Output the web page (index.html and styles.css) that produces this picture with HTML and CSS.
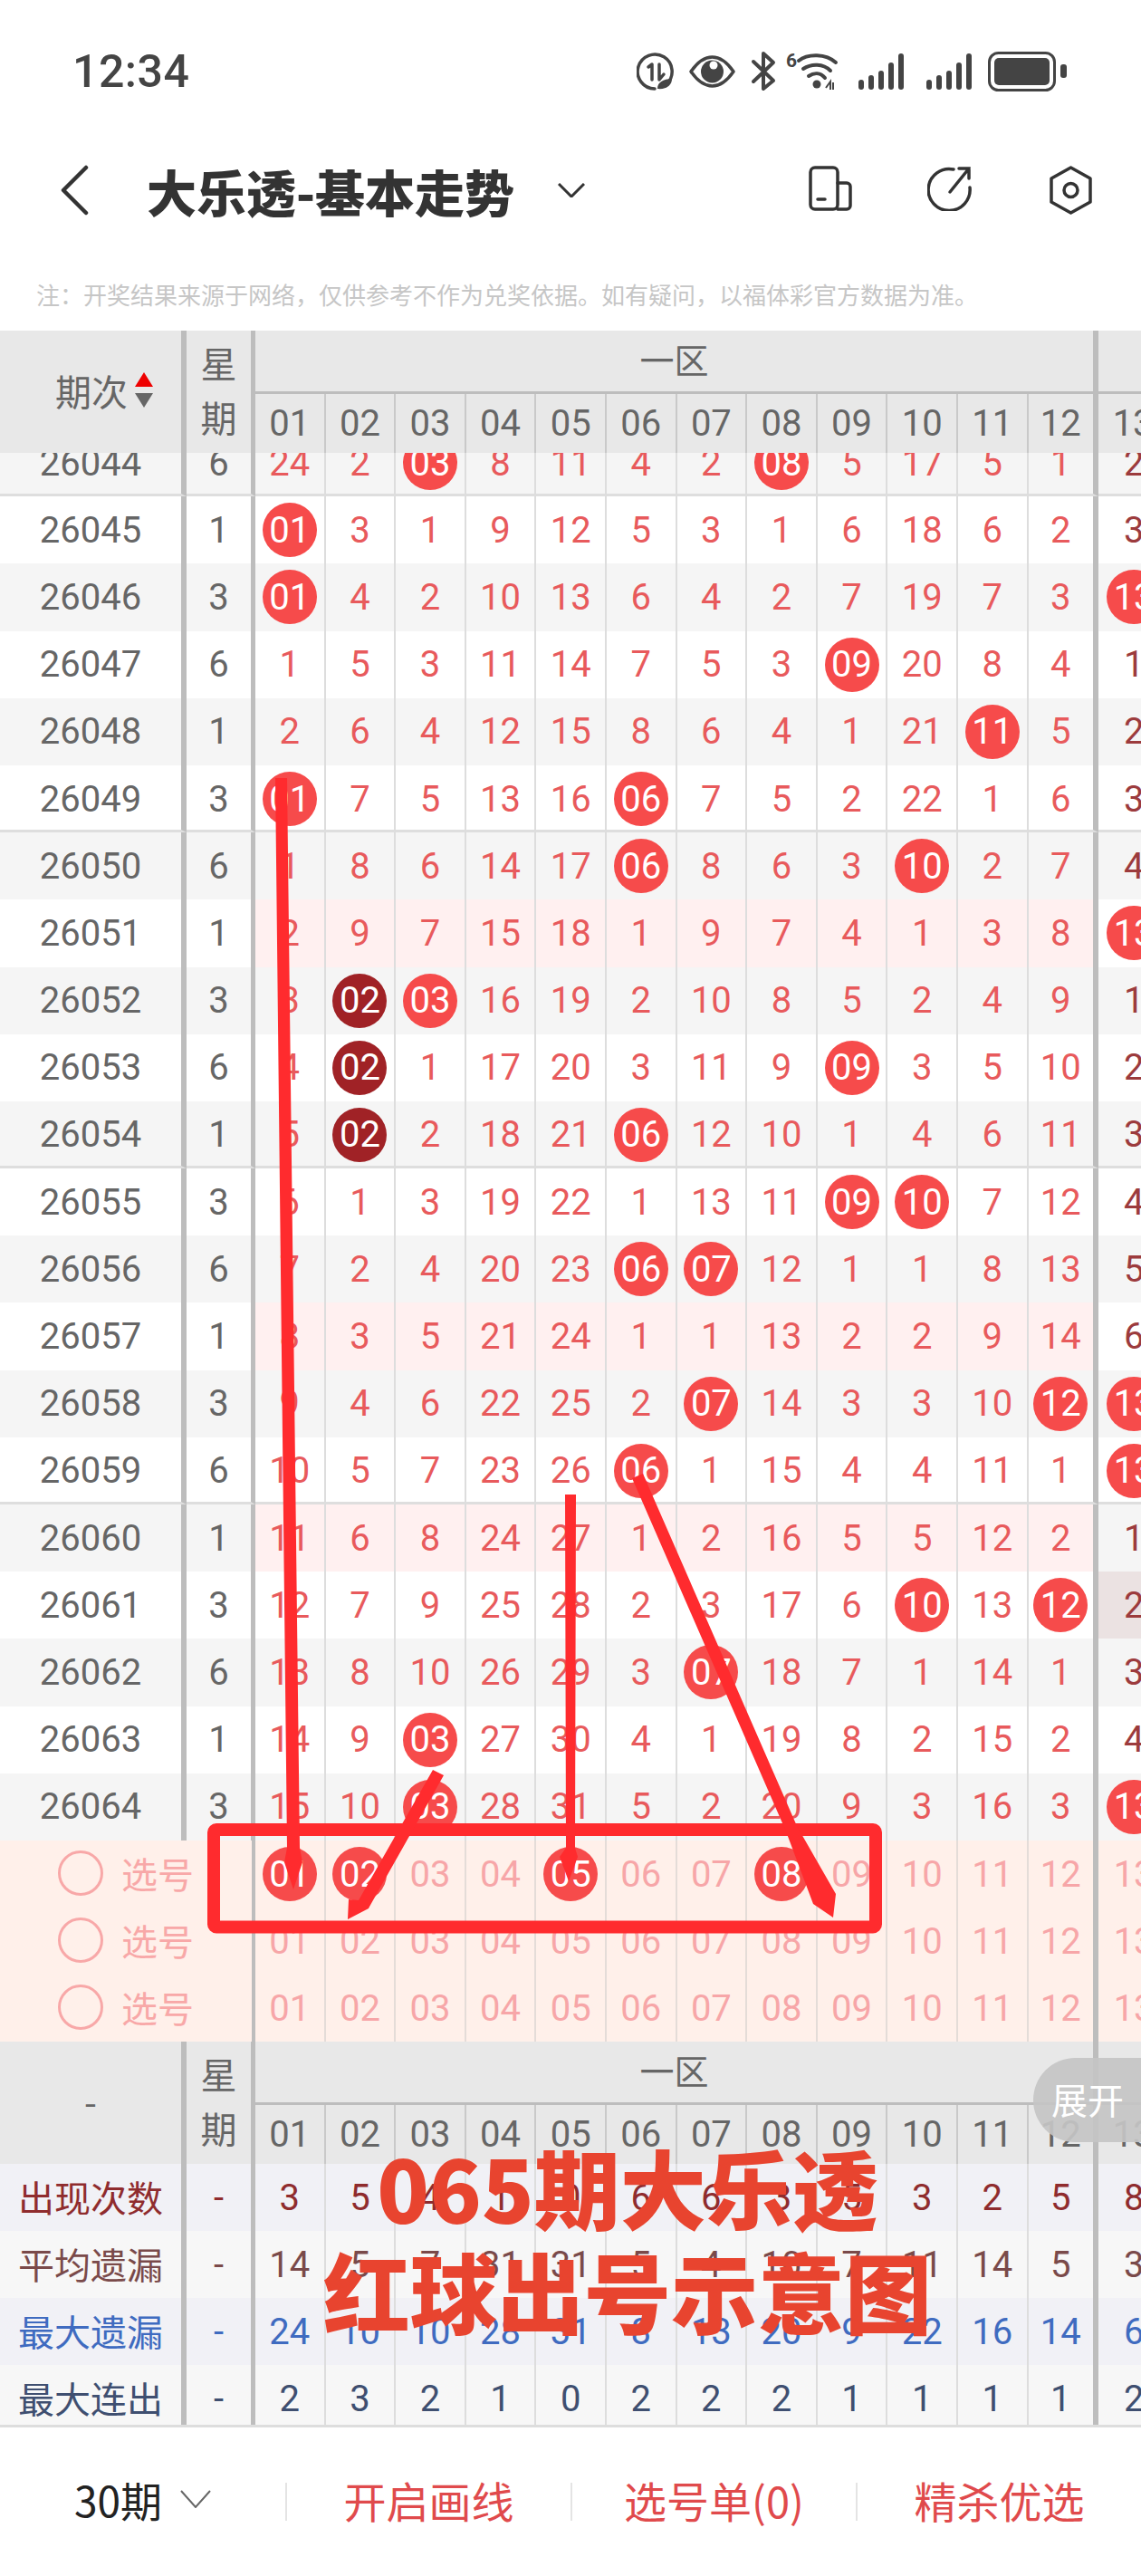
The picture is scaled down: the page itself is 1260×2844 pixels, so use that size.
FILE: index.html
```html
<!DOCTYPE html>
<html lang="zh-CN">
<head>
  <meta charset="UTF-8" />
  <title>大乐透-基本走势</title>
  <link rel="stylesheet" href="styles.css">
</head>
<body>
<div class="page">

  <div class="status">
    <span class="clock">12:34</span>
    <svg class="status-icons" viewBox="703 56 475 44" width="475" height="44">
      <g fill="none" stroke="#444" stroke-width="3.5" stroke-linecap="round" stroke-linejoin="round">
        <path d="M736 92A19 19 0 1 0 723 97"/>
        <path d="M716 73l4-3v17M728 70v17l5-6"/>
        <path d="M763 78C772 65 780 62 786.500 62S801 65 810 78C801 91 793 94 786.500 94S772 91 763 78Z"/>
        <path d="M832 67L854 88L843 97V58L854 68L832 89" stroke-width="4"/>
        <path d="M882 66C892 58 912 58 923 68M887 75C896 69 909 69 917 77M893 83C899 79 906 79 911 85" stroke-width="4"/>
      </g>
      <path d="M726 97c0-7 6-11 16-11 0 7-6 12-16 11z" fill="#444"/>
      <circle cx="786.500" cy="78" r="12.500" fill="#444"/>
      <circle cx="788" cy="71" r="4.500" fill="#fff"/>
      <circle cx="902" cy="92" r="4.500" fill="#444"/>
      <path d="M912 96l5-7v9M920 90v8" fill="none" stroke="#444" stroke-width="2"/>
      <text x="868" y="73" class="wifi-six">6</text>
      <g stroke="#444" stroke-width="6" stroke-linecap="round">
        <path d="M951 95v-5M962 95v-10M973 95v-15M984 95v-24M995 95v-34"/>
        <path d="M1026 95v-5M1037 95v-10M1048 95v-15M1059 95v-24M1070 95v-34"/>
      </g>
      <rect x="1092.500" y="57.500" width="72" height="41" rx="10" fill="none" stroke="#444" stroke-width="3"/>
      <rect x="1098" y="63" width="61" height="30" rx="5" fill="#444"/>
      <rect x="1171" y="70" width="7" height="15" rx="3" fill="#444"/>
    </svg>
  </div>

  <div class="nav">
    <svg class="back" viewBox="0 0 32 56" width="32" height="56">
      <path d="M29 3L4 28L29 53" fill="none" stroke="#333" stroke-width="4.500" stroke-linecap="round" stroke-linejoin="round"/>
    </svg>
    <h1 class="title">大乐透-基本走势</h1>
    <svg class="caret" viewBox="0 0 30 16" width="30" height="16">
      <path d="M1 1L15 15L29 1" fill="none" stroke="#333" stroke-width="3"/>
    </svg>
    <div class="nav-icons">
      <svg viewBox="0 0 48 50" width="48" height="50" fill="none" stroke="#333" stroke-width="3.500" stroke-linecap="round">
        <rect x="2" y="2" width="30" height="46" rx="5"/>
        <path d="M32 19h10a4 4 0 0 1 4 4v21a4 4 0 0 1-4 4H32M10 37h8"/>
      </svg>
      <svg viewBox="0 0 52 50" width="52" height="50" fill="none" stroke="#333" stroke-width="3.500" stroke-linecap="round">
        <path d="M29 4A23 23 0 1 0 47 24"/>
        <path d="M25 29L46 3M35 3h11v11"/>
      </svg>
      <svg viewBox="0 0 47 54" width="47" height="54" fill="none" stroke="#333" stroke-width="3.500" stroke-linejoin="round">
        <path d="M23.500 2L45 14V40L23.500 52L2 40V14Z"/>
        <circle cx="23.500" cy="27" r="7.500"/>
      </svg>
    </div>
  </div>

  <p class="note">注：开奖结果来源于网络，仅供参考不作为兑奖依据。如有疑问，以福体彩官方数据为准。</p>

  <div class="chart">
    <div class="head">
      <div class="head-name">
        <span>期次</span>
        <svg viewBox="0 0 20 40" width="20" height="40">
          <path d="M10 0L20 16H0Z" fill="#ee0000"/>
          <path d="M0 23H20L10 39Z" fill="#666"/>
        </svg>
      </div>
      <div class="head-week"><span>星</span><span>期</span></div>
      <div class="zone">
        <div class="zone-top"><div class="zone-one">一区</div></div>
        <div class="zone-nums"></div>
      </div>
    </div>

    <div class="scroll"><div id="rows" class="rows"></div></div>
    <div id="pick"></div>

    <div class="head">
      <div class="head-name head-dash">-</div>
      <div class="head-week"><span>星</span><span>期</span></div>
      <div class="zone">
        <div class="zone-top"><div class="zone-one">一区</div></div>
        <div class="zone-nums"></div>
      </div>
    </div>

    <div id="stats" class="stats"></div>
    <div class="expand">展开</div>
  </div>

  <div class="bottom">
    <div class="tab tab-first">30期
      <svg viewBox="0 0 34 20" width="34" height="20">
        <path d="M1 1L17 19L33 1" fill="none" stroke="#666" stroke-width="2"/>
      </svg>
    </div>
    <div class="tab">开启画线</div>
    <div class="tab">选号单(0)</div>
    <div class="tab">精杀优选</div>
  </div>

  <!-- hand drawn marks on top of the screenshot -->
  <svg class="marks" viewBox="0 0 1260 2844" width="1260" height="2844">
    <rect x="236" y="2020" width="731" height="107.500" rx="3" fill="none" stroke="#ff2b2e" stroke-width="14"/>
    <g fill="#ff2b2e">
      <path d="M304 859H317L331 2040L334 2056L324 2086L314 2056L317 2040Z"/>
      <path d="M624 1650H636L635 2040L638 2050L628 2077L618 2050L625 2040Z"/>
      <path d="M698 1632L710 1627L880 2016L923 2091L920 2117L898 2102L868 2022Z"/>
      <path d="M478 1954L490 1960L408 2105L407 2107L384 2119L385 2097L396 2098Z"/>
    </g>
  </svg>
  <div class="poster">
    <div class="poster-one">065期大乐透</div>
    <div>红球出号示意图</div>
  </div>
</div>

<script>
  const rows = [
    ["26044", 6, "24 2 03* 8 11 4 2 08* 5 17 5 1 2"],
    ["26045", 1, "01* 3 1 9 12 5 3 1 6 18 6 2 3"],
    ["26046", 3, "01* 4 2 10 13 6 4 2 7 19 7 3 13*"],
    ["26047", 6, "1 5 3 11 14 7 5 3 09* 20 8 4 1"],
    ["26048", 1, "2 6 4 12 15 8 6 4 1 21 11* 5 2"],
    ["26049", 3, "01* 7 5 13 16 06* 7 5 2 22 1 6 3"],
    ["26050", 6, "1 8 6 14 17 06* 8 6 3 10* 2 7 4"],
    ["26051", 1, "2 9 7 15 18 1 9 7 4 1 3 8 13*"],
    ["26052", 3, "3 02! 03* 16 19 2 10 8 5 2 4 9 1"],
    ["26053", 6, "4 02! 1 17 20 3 11 9 09* 3 5 10 2"],
    ["26054", 1, "5 02! 2 18 21 06* 12 10 1 4 6 11 3"],
    ["26055", 3, "6 1 3 19 22 1 13 11 09* 10* 7 12 4"],
    ["26056", 6, "7 2 4 20 23 06* 07* 12 1 1 8 13 5"],
    ["26057", 1, "8 3 5 21 24 1 1 13 2 2 9 14 6"],
    ["26058", 3, "9 4 6 22 25 2 07* 14 3 3 10 12* 13*"],
    ["26059", 6, "10 5 7 23 26 06* 1 15 4 4 11 1 13*"],
    ["26060", 1, "11 6 8 24 27 1 2 16 5 5 12 2 1"],
    ["26061", 3, "12 7 9 25 28 2 3 17 6 10* 13 12* 2"],
    ["26062", 6, "13 8 10 26 29 3 07* 18 7 1 14 1 3"],
    ["26063", 1, "14 9 03* 27 30 4 1 19 8 2 15 2 4"],
    ["26064", 3, "15 10 03* 28 31 5 2 20 9 3 16 3 13*"]
  ];
  const pinkRows = ["26051", "26057", "26060"];
  const lineRows = ["26044", "26049", "26054", "26059"];
  const allNums = "01 02 03 04 05 06 07 08 09 10 11 12 13".split(" ");

  const stats = [
    ["出现次数", "red", "3 5 4 1 0 6 6 3 5 3 2 5 8"],
    ["平均遗漏", "brown", "14 5 7 31 31 5 4 10 7 11 14 5 3"],
    ["最大遗漏", "blue", "24 10 10 28 31 8 13 20 9 22 16 14 6"],
    ["最大连出", "slate", "2 3 2 1 0 2 2 2 1 1 1 1 2"]
  ];

  function numCell(text, extra) {
    let inner = text;
    if (text.endsWith("*")) inner = `<b class="ball">${text.slice(0, -1)}</b>`;
    if (text.endsWith("!")) inner = `<b class="ball ball-dark">${text.slice(0, -1)}</b>`;
    return `<div class="cell num ${extra || ""}">${inner}</div>`;
  }

  document.querySelectorAll(".zone-nums").forEach(el => {
    el.innerHTML = allNums.map(n => `<div class="zone-num">${n}</div>`).join("");
  });

  document.getElementById("rows").innerHTML = rows.map(([name, week, nums], r) => {
    const cls = [r % 2 === 0 ? "alt" : "", lineRows.includes(name) ? "line" : ""].join(" ");
    const cells = nums.split(" ").map((n, i) => {
      if (i === 12) return numCell(n, name === "26061" ? "c13 c13-mark" : "c13");
      return numCell(n, pinkRows.includes(name) ? "pink" : "");
    }).join("");
    return `<div class="row ${cls}"><div class="cell name">${name}</div><div class="cell wk">${week}</div>${cells}</div>`;
  }).join("");

  const firstPick = ["01", "02", "05", "08"];
  document.getElementById("pick").innerHTML = [0, 1, 2].map(r => {
    const cells = allNums.map(n => numCell(r === 0 && firstPick.includes(n) ? n + "*" : n)).join("");
    return `<div class="row pick-row"><div class="pick-label"><i class="radio"></i>选号</div>${cells}</div>`;
  }).join("");

  document.getElementById("stats").innerHTML = stats.map(([name, tone, nums], r) => {
    const cells = nums.split(" ").map(n => numCell(n)).join("");
    return `<div class="row stat ${tone} ${r % 2 ? "stat-alt" : ""}"><div class="cell name">${name}</div><div class="cell wk">-</div>${cells}</div>`;
  }).join("");
</script>
</body>
</html>
```

FILE: styles.css
```css
* {
  box-sizing: border-box;
}

body {
  margin: 0;
  background: #fff;
  font-family: Roboto, "Noto Sans CJK SC", sans-serif;
  color: #666;
}

.page {
  position: relative;
  width: 1260px;
  height: 2844px;
  overflow: hidden;
}

/* status bar */
.status {
  display: flex;
  align-items: center;
  justify-content: space-between;
  height: 158px;
  padding: 0 82px 0 80px;
}

.clock {
  font-size: 50px;
  font-weight: 500;
  color: #444;
  letter-spacing: 0.5px;
}

.wifi-six {
  font-family: Roboto, sans-serif;
  font-size: 21px;
  font-weight: 700;
  fill: #444;
}

/* title bar */
.nav {
  display: flex;
  align-items: center;
  height: 104px;
  padding: 0 54px 0 66px;
}

.title {
  margin: 0 48px 0 64px;
  font-family: "Noto Sans CJK SC", sans-serif;
  font-size: 55px;
  font-weight: 900;
  color: #333;
  white-space: nowrap;
}

.nav-icons {
  display: flex;
  gap: 83px;
  margin-left: auto;
}

.note {
  height: 103px;
  margin: 0;
  padding: 50px 0 0 40px;
  font-family: "Noto Sans CJK SC", sans-serif;
  font-size: 26px;
  line-height: 26px;
  color: #c6c6c6;
  white-space: nowrap;
}

/* chart */
.chart {
  position: relative;
  border-bottom: 3px solid #ddd;
}

.head {
  display: grid;
  grid-template-columns: 206px 76px 1fr;
  height: 135px;
  background: #e8e8e8;
  font-size: 40px;
}

.head-name {
  display: flex;
  align-items: center;
  justify-content: flex-start;
  gap: 8px;
  padding: 0 0 3px 61px;
  border-right: 6px solid #bdbdbd;
  font-family: "Noto Sans CJK SC", sans-serif;
}

.head-dash {
  justify-content: center;
  padding: 0 0 5px;
}

.head-week {
  display: flex;
  flex-direction: column;
  align-items: center;
  justify-content: center;
  gap: 8px;
  padding-bottom: 5px;
  border-right: 5px solid #bdbdbd;
  font-family: "Noto Sans CJK SC", sans-serif;
  line-height: 52px;
}

.zone {
  overflow: hidden;
}

.zone-top {
  height: 70px;
  border-bottom: 3px solid #bdbdbd;
}

.zone-one {
  width: 931.2px;
  height: 67px;
  border-right: 6px solid #bdbdbd;
  font-family: "Noto Sans CJK SC", sans-serif;
  font-size: 38px;
  line-height: 61px;
  text-align: center;
}

.zone-nums {
  display: grid;
  grid-template-columns: repeat(12, 77.6px) 78px;
  height: 65px;
}

.zone-num {
  display: flex;
  align-items: center;
  justify-content: center;
  border-right: 2px solid #c9c9c9;
}

.zone-num:nth-child(12) {
  border-right: 6px solid #bdbdbd;
}

.scroll {
  height: 1532px;
  overflow: hidden;
}

.rows {
  margin-top: -26px;
}

.row {
  display: grid;
  grid-template-columns: 206px 76px repeat(12, 77.6px) 78px;
  height: 74.2px;
  background: #fff;
  font-size: 40px;
}

.row.alt {
  background: #f5f5f5;
}

.cell {
  display: flex;
  align-items: center;
  justify-content: center;
}

.row.line .cell {
  padding-top: 3px;
  border-bottom: 3px solid #dedede;
}

.name {
  border-right: 6px solid #bdbdbd;
}

.wk {
  border-right: 5px solid #bdbdbd;
}

.num {
  border-right: 2px solid #ddd;
  color: #e85a5c;
}

.num:nth-child(14) {
  border-right: 6px solid #bdbdbd;
}

.num.c13 {
  border-right: none;
  color: #9c3b3d;
}

.num.c13-mark {
  background: #ebe2e2;
}

.num.pink {
  background: #fff0f0;
}

.ball {
  display: flex;
  align-items: center;
  justify-content: center;
  flex: none;
  width: 60px;
  height: 60px;
  border-radius: 50%;
  background: #f64b4b;
  color: #fff;
  font-weight: 400;
}

.ball-dark {
  background: #a02226;
}

/* pick rows */
.pick-row {
  height: 74px;
  background: #fff0ea;
}

.pick-row .num {
  border-right-color: #e4dcd8;
  color: #f7a6a8;
}

.pick-row .num:nth-child(13) {
  border-right: 6px solid #bdbdbd;
}

.pick-row .num:last-child {
  border-right: none;
}

.pick-label {
  display: flex;
  align-items: center;
  grid-column: span 2;
  padding: 0 0 3px 64px;
  border-right: 4px solid #bdbdbd;
  font-family: "Noto Sans CJK SC", sans-serif;
  color: #f8a8a8;
}

.radio {
  width: 50px;
  height: 50px;
  margin-right: 20px;
  border: 3px solid #f8a8a8;
  border-radius: 50%;
}

/* stats */
.stats {
  height: 288px;
  overflow: hidden;
}

.stat {
  height: 74px;
  background: #f1f1f6;
}

.stat-alt {
  background: #f7f7f7;
}

.stat .name {
  padding-bottom: 3px;
  font-family: "Noto Sans CJK SC", sans-serif;
}

.stat .num:last-child {
  border-right: none;
}

.red .cell {
  color: #8f2c2e;
}

.brown .cell {
  color: #7a4a4a;
}

.blue .cell {
  color: #3f6bc0;
}

.slate .cell {
  color: #3f4f70;
}

.expand {
  position: absolute;
  right: 0;
  top: 1907px;
  width: 119px;
  height: 93px;
  border-radius: 47px 0 0 47px;
  background: rgba(196, 196, 196, 0.92);
  font-family: "Noto Sans CJK SC", sans-serif;
  font-size: 40px;
  line-height: 90px;
  color: #fff;
  padding-left: 20px;
}

/* bottom bar */
.bottom {
  display: grid;
  grid-template-columns: repeat(4, 1fr);
  align-items: center;
  height: 163px;
}

.tab {
  display: flex;
  align-items: center;
  justify-content: center;
  height: 42px;
  padding-bottom: 5px;
  border-left: 2px solid #e4e4e4;
  font-family: "Noto Sans CJK SC", sans-serif;
  font-size: 47px;
  color: #e04a4c;
  white-space: nowrap;
}

.tab-first {
  gap: 20px;
  border-left: none;
  font-size: 46px;
  color: #222;
}

/* overlays */
.marks {
  position: absolute;
  left: 0;
  top: 0;
}

.poster {
  position: absolute;
  left: 693px;
  top: 2357px;
  transform: translateX(-50%);
  font-family: "Noto Sans CJK SC", sans-serif;
  font-size: 96px;
  font-weight: 900;
  line-height: 114px;
  color: #e8442f;
  text-align: center;
  white-space: nowrap;
}

.poster-one {
  font-size: 95px;
}
```
